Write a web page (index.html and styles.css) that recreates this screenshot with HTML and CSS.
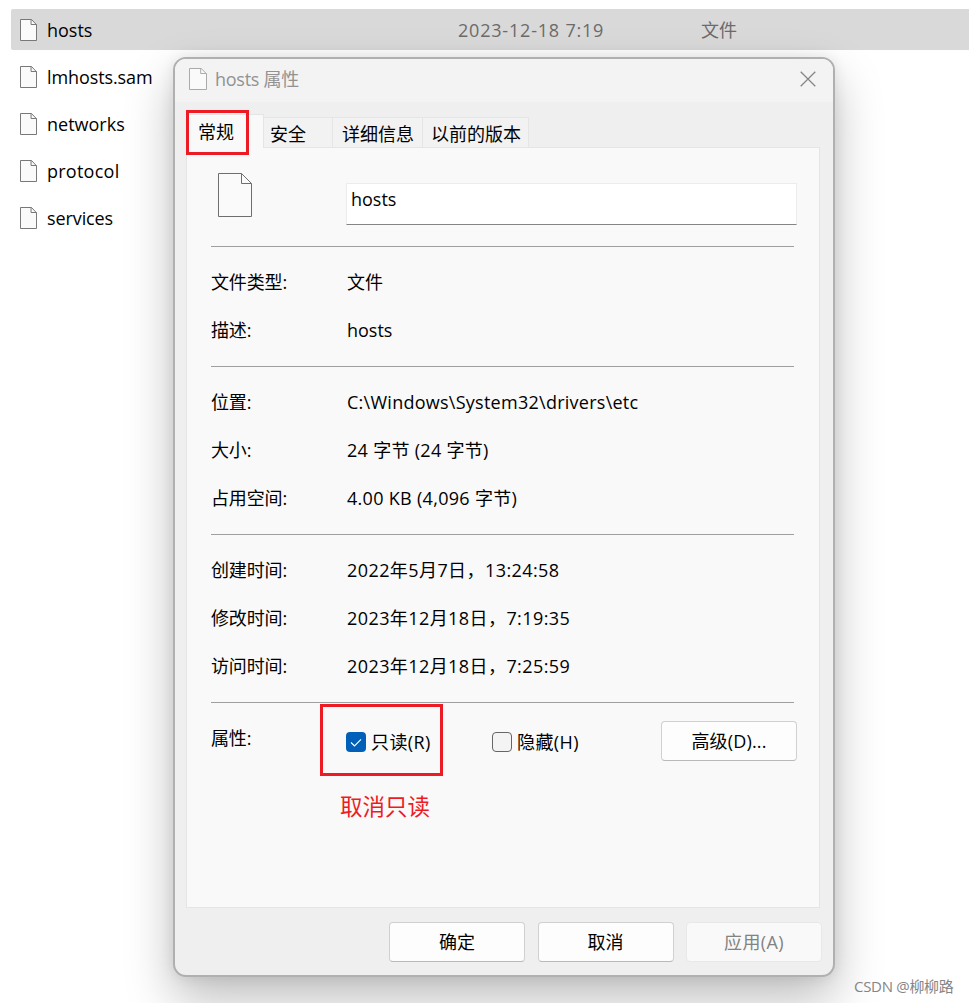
FILE: index.html
```html
<!DOCTYPE html>
<html lang="zh-CN">
<head>
<meta charset="utf-8">
<title>hosts 属性</title>
<link rel="stylesheet" href="styles.css">
</head>
<body>
<svg class="defs" width="0" height="0">
  <symbol id="file" viewBox="0 0 18 22" preserveAspectRatio="none">
    <path d="M.5.5H12.2L17.5 5.8V21.5H.5Z" fill="#fafafa" stroke="currentColor"/>
    <path d="M11.7.5V5.5H17.5" fill="none" stroke="currentColor"/>
  </symbol>
</svg>
<main class="explorer">
  <div class="file selected"><svg class="file-icon"><use href="#file"/></svg><span class="name">hosts</span><span class="date">2023-12-18 7:19</span><span class="kind">文件</span></div>
  <div class="file"><svg class="file-icon"><use href="#file"/></svg><span class="name tight">lmhosts.sam</span></div>
  <div class="file"><svg class="file-icon"><use href="#file"/></svg><span class="name">networks</span></div>
  <div class="file"><svg class="file-icon"><use href="#file"/></svg><span class="name loose">protocol</span></div>
  <div class="file"><svg class="file-icon"><use href="#file"/></svg><span class="name tight">services</span></div>
</main>

<section class="dialog">
  <header class="titlebar">
    <svg class="file-icon"><use href="#file"/></svg>
    <h1 class="title">hosts 属性</h1>
    <svg class="close" viewBox="0 0 16 16"><path d="M.7.7L15.3 15.3M15.3.7L.7 15.3" stroke="#868686" stroke-width="1.3" fill="none"/></svg>
  </header>
  <nav class="tabs">
    <div class="tab active">常规<span class="mark mark-tab"></span></div>
    <div class="tab t-sec">安全</div>
    <div class="tab t-det">详细信息</div>
    <div class="tab t-ver">以前的版本</div>
  </nav>
  <div class="panel">
    <div class="head">
      <svg class="big-icon" viewBox="0 0 34 44"><path d="M.5.5H23.5L33.5 10.5V43.5H.5Z" fill="#fafafa" stroke="#6e6e6e"/><path d="M23.5.5V10.5H33.5" fill="none" stroke="#6e6e6e"/></svg>
      <div class="input">hosts</div>
    </div>
    <div class="group">
      <div class="row"><span class="label">文件类型:</span><span>文件</span></div>
      <div class="row"><span class="label">描述:</span><span>hosts</span></div>
    </div>
    <div class="group">
      <div class="row"><span class="label">位置:</span><span class="v-path">C:\Windows\System32\drivers\etc</span></div>
      <div class="row"><span class="label">大小:</span><span class="v-size">24 字节 (24 字节)</span></div>
      <div class="row"><span class="label">占用空间:</span><span class="v-size">4.00 KB (4,096 字节)</span></div>
    </div>
    <div class="group">
      <div class="row"><span class="label">创建时间:</span><span class="v-time">2022年5月7日，13:24:58</span></div>
      <div class="row"><span class="label">修改时间:</span><span class="v-time">2023年12月18日，7:19:35</span></div>
      <div class="row"><span class="label">访问时间:</span><span class="v-time">2023年12月18日，7:25:59</span></div>
    </div>
    <div class="group attrs">
      <span class="label">属性:</span>
      <div class="check readonly"><span class="box on"><svg viewBox="0 0 20 20"><path d="M5 10.5L8.5 14L15 7.4" fill="none" stroke="#fff" stroke-width="1.1"/></svg></span><span class="check-text">只读(R)</span>
        <span class="mark mark-check"></span><span class="note">取消只读</span></div>
      <div class="check"><span class="box"></span><span class="check-text">隐藏(H)</span></div>
      <div class="btn advanced">高级(D)...</div>
    </div>
  </div>
  <footer class="actions">
    <div class="btn">确定</div>
    <div class="btn">取消</div>
    <div class="btn disabled">应用(A)</div>
  </footer>
</section>
<div class="watermark">CSDN @柳柳路</div>
</body>
</html>
```
FILE: styles.css
```css
* { box-sizing: border-box; }
body {
  margin: 0;
  position: relative;
  width: 969px;
  height: 1003px;
  overflow: hidden;
  background: #fff;
  color: #000;
  font: 18px/24px "Open Sans", "Noto Sans CJK SC", sans-serif;
  white-space: nowrap;
}
.defs { position: absolute; }

.explorer { display: flex; flex-direction: column; gap: 6px; padding: 9px 0 0 11px; }
.file { display: flex; align-items: center; height: 41px; padding-left: 9px; }
.file.selected { background: #d9d9d9; border-radius: 2px 0 0 2px; }
.file-icon { width: 17px; height: 22px; flex: none; color: #747474; }
.name { width: 411px; margin-left: 10px; }
.name.tight { letter-spacing: -.1px; }
.name.loose { letter-spacing: .25px; }
.date { width: 243px; color: #6b6b6b; letter-spacing: .8px; }
.kind { color: #6b6b6b; }

.dialog {
  position: absolute;
  left: 173px;
  top: 57px;
  width: 662px;
  height: 920px;
  border: 2px solid #b0b0b0;
  border-radius: 13px;
  background: #efefef;
  box-shadow: 0 22px 48px rgba(0, 0, 0, .26), 0 0 14px rgba(0, 0, 0, .09);
}
.titlebar {
  display: flex;
  align-items: center;
  height: 43px;
  padding: 0 17px 3px 14px;
  border-radius: 11px 11px 0 0;
  background: #f3f3f3;
}
.titlebar .file-icon { width: 18px; color: #aaa; }
.title { flex: 1; margin: 0 0 0 8px; font-size: 18px; font-weight: 400; letter-spacing: -.25px; color: #929292; }
.close { width: 16px; height: 16px; }

.tabs { display: flex; align-items: flex-end; height: 45px; padding-left: 11px; }
.tab {
  height: 30px;
  border: 1px solid #e5e5e5;
  border-width: 1px 1px 0 0;
  background: #f2f2f2;
  padding-top: 4px;
}
.tab.active {
  position: relative;
  width: 78px;
  height: 34px;
  margin-bottom: -1px;
  padding: 5px 0 0 11px;
  border-left-width: 1px;
  background: #f9f9f9;
  z-index: 1;
}
.t-sec { width: 69px; padding-left: 6px; }
.t-det { width: 90px; padding-left: 9px; }
.t-ver { width: 106px; padding-left: 8px; }

.mark { position: absolute; border: 3px solid #ed1c24; }
.mark-tab { left: -1px; top: -5px; width: 63px; height: 45px; }
.mark-check { left: -26px; top: -28px; width: 123px; height: 72px; }

.panel {
  width: 634px;
  height: 761px;
  margin-left: 11px;
  border: 1px solid #e5e5e5;
  background: #f9f9f9;
  padding: 0 22px 0 24px;
}
.head { display: flex; height: 98px; padding: 25px 0 0 7px; }
.big-icon { width: 34px; height: 44px; }
.input {
  width: 451px;
  height: 42px;
  margin: 10px 0 0 94px;
  padding: 3px 4px;
  border: 1px solid #ececec;
  border-bottom-color: #858585;
  background: #fff;
}
.group { border-top: 1px solid #9f9f9f; margin-right: 3px; padding: 11px 0 12px; }
.row { display: flex; align-items: center; height: 48px; }
.label { width: 136px; flex: none; letter-spacing: -.15px; }
.v-path { letter-spacing: .26px; }
.v-size { letter-spacing: .3px; }
.v-time { letter-spacing: .42px; }
.attrs { display: flex; align-items: flex-start; padding: 0; }
.attrs .label { padding-top: 23px; width: 135px; }
.check { position: relative; display: flex; flex: none; align-items: center; gap: 5px; width: 146px; height: 20px; margin-top: 29px; }
.check-text { letter-spacing: .4px; }
.box { width: 20px; height: 20px; flex: none; border: 1px solid #666; border-radius: 4px; background: #f4f4f4; }
.box.on { border: 0; background: #005fb8; }
.box svg { display: block; }
.note { position: absolute; left: -6px; top: 59px; color: #ed1c24; font-size: 22.5px; line-height: 32px; }

.btn {
  width: 136px;
  height: 40px;
  flex: none;
  border: 1px solid #d0d0d0;
  border-bottom-color: #b9b9b9;
  border-radius: 4px;
  background: #fdfdfd;
  text-align: center;
  line-height: 38px;
}
.advanced { margin: 18px 0 0 23px; letter-spacing: .15px; }
.btn.disabled { border-color: #e8e8e8; background: #f9f9f9; color: #838383; letter-spacing: .4px; }
.actions { display: flex; gap: 12.5px; padding: 14px 0 0 214px; }

.watermark { position: absolute; left: 854px; top: 975px; font-size: 15px; line-height: 22px; letter-spacing: -.3px; color: #858585; }
```
